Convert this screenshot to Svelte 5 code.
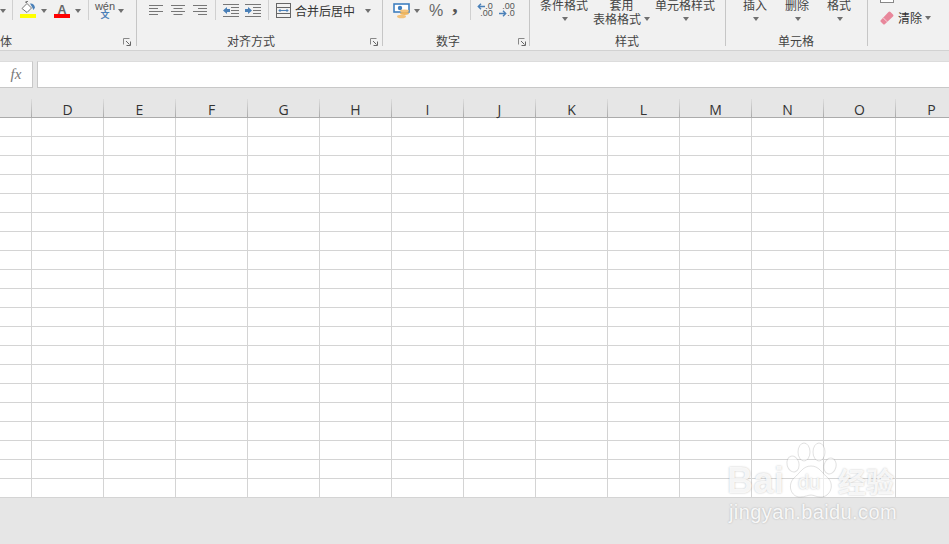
<script>
  const cols = ['', 'D', 'E', 'F', 'G', 'H', 'I', 'J', 'K', 'L', 'M', 'N', 'O', 'P'];
  const rows = Array.from({ length: 20 }, (_, i) => i);
</script>

{#snippet arrow(cls = '')}
  <i class="arrow {cls}"></i>
{/snippet}

{#snippet launcher()}
  <svg class="launcher" width="8" height="8" viewBox="0 0 8 8">
    <path d="M0.5 6.5V0.5H6.5" fill="none" stroke="#888" />
    <path d="M3 3L6.5 6.5M7.5 3.5V7.5H3.5" fill="none" stroke="#666" />
  </svg>
{/snippet}

<div class="page">
  <header class="ribbon">
    <section class="group g1">
      <div class="tools">
        {@render arrow('a1')}
        <b class="vsep s1"></b>
        <div class="color-tool">
          <svg width="16" height="13" viewBox="0 0 16 13">
            <path d="M2 7.5L7 2.5L11.5 7L7 11.5Z" fill="#fff" stroke="#777" />
            <path d="M5 1.5L7 0M6 2L8 0" stroke="#777" fill="none" />
            <path d="M10 2.5Q14 2 15 6.5L13.5 9L12 6Z" fill="#4a80b8" />
          </svg>
          <span class="bar yellow"></span>
        </div>
        {@render arrow('a2')}
        <div class="color-tool font-a">
          <span class="big-a">A</span>
          <span class="bar red"></span>
        </div>
        {@render arrow('a2')}
        <b class="vsep s2"></b>
        <div class="wen"><span class="w1">wén</span><span class="w2">文</span></div>
        {@render arrow('a3')}
      </div>
      <div class="caption c1"><span>体</span>{@render launcher()}</div>
    </section>

    <section class="group g2">
      <div class="tools">
        <svg class="ic-align" width="14" height="11" viewBox="0 0 14 11"><path d="M0 .5H14M0 3.5H9M0 6.5H14M0 9.5H9" stroke="#777" /></svg>
        <svg class="ic-align next" width="14" height="11" viewBox="0 0 14 11"><path d="M0 .5H14M2.500 3.500H11.500M0 6.500H14M2.500 9.500H11.500" stroke="#777" /></svg>
        <svg class="ic-align next" width="14" height="11" viewBox="0 0 14 11"><path d="M0 .5H14M5 3.5H14M0 6.5H14M5 9.5H14" stroke="#777" /></svg>
        <b class="vsep s3"></b>
        <svg class="ic-indent" width="16" height="13" viewBox="0 0 16 13">
          <path d="M0 .5H16M8 3.500H16M8 6.500H16M8 9.500H16M0 12.500H16" stroke="#777" />
          <path d="M0 6.500L4 3V5H7V8H4V10Z" fill="#4a80b8" />
        </svg>
        <svg class="ic-indent next2" width="16" height="13" viewBox="0 0 16 13">
          <path d="M0 .5H16M8 3.500H16M8 6.500H16M8 9.500H16M0 12.500H16" stroke="#777" />
          <path d="M7 6.500L3 3V5H0V8H3V10Z" fill="#4a80b8" />
        </svg>
        <b class="vsep s4"></b>
        <svg class="ic-merge" width="15" height="15" viewBox="0 0 15 15">
          <rect x=".5" y=".5" width="14" height="14" fill="none" stroke="#666" />
          <path d="M.5 4.500H14.500M.5 10.500H14.500" stroke="#666" />
          <path d="M3 7.500H12M4.500 6L3 7.500L4.500 9M10.500 6L12 7.500L10.500 9" fill="none" stroke="#4a80b8" />
        </svg>
        <span class="merge-label">合并后居中</span>
        {@render arrow('a4')}
      </div>
      <div class="caption c2"><span>对齐方式</span>{@render launcher()}</div>
    </section>

    <section class="group g3">
      <div class="tools">
        <svg class="ic-money" width="17" height="16" viewBox="0 0 17 16">
          <rect x="1" y="1" width="15" height="8" fill="#fff" stroke="#3f7fc0" stroke-width="1.600" />
          <circle cx="7" cy="5" r="2.200" fill="#3f7fc0" />
          <ellipse cx="11.500" cy="8" rx="4.500" ry="1.400" fill="#f3c27a" />
          <ellipse cx="11.500" cy="10.500" rx="4.500" ry="1.400" fill="#efb65f" />
          <ellipse cx="8.500" cy="13.500" rx="4.500" ry="1.800" fill="#f3c27a" />
        </svg>
        {@render arrow('a5')}
        <span class="pct">%</span>
        <span class="comma">,</span>
        <b class="vsep s5"></b>
        <div class="dec d1">
          <span class="dline"><svg width="8" height="7" viewBox="0 0 8 7"><path d="M8 3.500H1.500M4 .8L1.300 3.500L4 6.200" fill="none" stroke="#4a80b8" stroke-width="1.400" /></svg>.0</span>
          <span class="dline">.00</span>
        </div>
        <div class="dec d2">
          <span class="dline">.00</span>
          <span class="dline"><svg width="8" height="7" viewBox="0 0 8 7"><path d="M0 3.500H6.500M4 .8L6.700 3.500L4 6.200" fill="none" stroke="#4a80b8" stroke-width="1.400" /></svg>.0</span>
        </div>
      </div>
      <div class="caption c3"><span>数字</span>{@render launcher()}</div>
    </section>

    <section class="group g4">
      <div class="tools text-tools">
        <div class="stack s-a"><span>条件格式</span>{@render arrow('low')}</div>
        <div class="stack s-b"><span>套用</span><span class="inline">表格格式{@render arrow('side')}</span></div>
        <div class="stack s-c"><span>单元格样式</span>{@render arrow('low')}</div>
      </div>
      <div class="caption c4"><span>样式</span></div>
    </section>

    <section class="group g5">
      <div class="tools text-tools">
        <div class="stack cell first"><span>插入</span>{@render arrow('low')}</div>
        <div class="stack cell"><span>删除</span>{@render arrow('low')}</div>
        <div class="stack cell"><span>格式</span>{@render arrow('low')}</div>
      </div>
      <div class="caption c5"><span>单元格</span></div>
    </section>

    <section class="group g6">
      <i class="clip-box"></i>
      <div class="clear">
        <svg width="14" height="14" viewBox="0 0 14 14">
          <path d="M0.500 9.500L8.500 1Q9.500 0 10.500 1L13 3.500Q14 4.500 13 5.500L5 13Q4 14 3 13L1 11Q0 10.200 .5 9.500Z" fill="#e8879b" />
          <path d="M3.200 6.800L7.200 10.800" stroke="#f6d5dc" />
        </svg>
        <span>清除</span>
        {@render arrow('a6')}
      </div>
    </section>
  </header>

  <div class="formula">
    <div class="fx">fx</div>
    <div class="input"></div>
  </div>

  <div class="sheet">
    <div class="head">
      {#each cols as c}
        <div class="hcell">{c}</div>
      {/each}
    </div>
    {#each rows as r (r)}
      <div class="row">
        {#each cols as c}
          <div class="cell-box"></div>
        {/each}
      </div>
    {/each}
  </div>

  <div class="mark">
    <div class="logo">
      <span class="bai">Bai</span>
      <svg class="paw" width="52" height="58" viewBox="0 0 52 58">
        <g fill="rgba(255,255,255,.55)" stroke="rgba(120,120,120,.22)">
          <ellipse cx="8" cy="22" rx="6" ry="8" transform="rotate(-15 8 22)" />
          <ellipse cx="19" cy="10" rx="6" ry="9" />
          <ellipse cx="34" cy="10" rx="6" ry="9" />
          <ellipse cx="45" cy="24" rx="6" ry="8" transform="rotate(15 45 24)" />
          <path d="M26 24C34 24 37 31 43 36C50 43 45 55 36 55C31 55 29 53 26 53C23 53 20 55 15 55C6 55 2 43 9 36C15 31 18 24 26 24Z" />
        </g>
      </svg>
      <span class="du">du</span>
      <span class="jy">经验</span>
    </div>
    <div class="url">jingyan.baidu.com</div>
  </div>
</div>

<style>
  :global(body) { margin: 0; }
  .page {
    position: relative;
    width: 949px;
    height: 544px;
    overflow: hidden;
    background: #e6e6e6;
    font-family: "Noto Sans CJK SC", "Liberation Sans", sans-serif;
    color: #444;
  }
  .ribbon {
    display: flex;
    height: 50px;
    overflow: hidden;
    background: #f1f1f1;
    border-bottom: 1px solid #d2d2d2;
  }
  .group {
    height: 46px;
    display: flex;
    flex-direction: column;
    justify-content: space-between;
    box-sizing: border-box;
    border-right: 1px solid #c6c6c6;
    flex: none;
  }
  .g1 { width: 137px; }
  .g2 { width: 246px; }
  .g3 { width: 147px; }
  .g4 { width: 196px; }
  .g5 { width: 142px; }
  .g6 { flex: 1; border-right: 0; justify-content: flex-start; }

  .tools { display: flex; align-items: center; height: 21px; }
  .caption {
    display: flex;
    align-items: center;
    height: 16px;
    margin-bottom: -3px;
    font-size: 12px;
    line-height: 16px;
    color: #444;
    white-space: nowrap;
  }
  .launcher { margin-left: auto; flex: none; position: relative; top: 1px; }
  .c1 { padding-right: 5px; }
  .c2 { padding-left: 90px; padding-right: 4px; }
  .c3 { padding-left: 53px; padding-right: 3px; }
  .c4 { padding-left: 85px; }
  .c5 { padding-left: 52px; }

  .arrow {
    display: block;
    flex: none;
    width: 0;
    height: 0;
    border-left: 3.500px solid transparent;
    border-right: 3.500px solid transparent;
    border-top: 4px solid #707070;
  }
  .vsep { display: block; flex: none; width: 1px; height: 20px; background: #d0d0d0; align-self: flex-start; }
  .s1 { margin-left: 6px; }
  .color-tool {
    display: flex;
    flex-direction: column;
    align-items: center;
    width: 16px;
    height: 18px;
    margin-left: 7px;
    align-self: flex-start;
  }
  .color-tool svg { margin-top: 1px; }
  .font-a { margin-left: 7px; }
  .bar { display: block; flex: none; width: 16px; height: 4px; }
  .yellow { background: #ffff00; }
  .red { background: #ff0000; }
  .big-a {
    font: bold 12.500px/12px "Liberation Sans", sans-serif;
    height: 10px;
    margin-top: 4px;
    color: #666;
  }
  .color-tool + .arrow { margin-left: 5px; }
  .s2 { margin-left: 7px; }
  .wen {
    display: flex;
    flex-direction: column;
    align-items: center;
    width: 18px;
    margin-left: 7px;
    align-self: flex-start;
  }
  .w1 { font: 11px/12px "Liberation Sans", sans-serif; color: #555; }
  .w2 { font-size: 9px; line-height: 4px; height: 4px; margin-top: 1px; color: #4a80b8; font-weight: 700; }
  .a3 { margin-left: 4px; }

  .ic-align { margin-left: 12px; }
  .ic-align.next { margin-left: 8px; }
  .s3 { margin-left: 8px; }
  .ic-indent { margin-left: 7px; }
  .ic-indent.next2 { margin-left: 6px; }
  .s4 { margin-left: 7px; }
  .ic-merge { margin-left: 7px; }
  .merge-label { font-size: 12px; color: #333; margin-left: 4px; white-space: nowrap; }
  .a4 { margin-left: 10px; }

  .ic-money { margin-left: 10px; }
  .a5 { margin-left: 4px; }
  .pct { font: 16px/20px "Liberation Sans", sans-serif; color: #666; margin-left: 9px; }
  .comma { font: bold 22px/20px "Liberation Serif", serif; color: #555; margin-left: 9px; position: relative; top: -6px; }
  .s5 { margin-left: 12px; }
  .dec {
    display: flex;
    flex-direction: column;
    align-items: flex-end;
    width: 15px;
    align-self: flex-start;
    margin-top: 3px;
    font: 9px/7px "Liberation Sans", sans-serif;
    color: #555;
  }
  .dline { display: flex; align-items: center; height: 7px; white-space: nowrap; }
  .d1 { margin-left: 7px; }
  .d2 { margin-left: 7px; }

  .text-tools {
    align-items: flex-start;
    margin-top: -2px;
    height: 23px;
    font-size: 12px;
    color: #444;
    white-space: nowrap;
  }
  .stack { display: flex; flex-direction: column; align-items: center; }
  .stack span { line-height: 14px; height: 14px; }
  .stack .low { margin: 5px 0 0 2px; }
  .inline { display: flex; align-items: center; }
  .side { margin-left: 3px; }
  .s-a { margin-left: 10px; }
  .s-b { margin-left: 5px; }
  .s-c { margin-left: 5px; }
  .cell { margin-left: 18px; }
  .cell.first { margin-left: 17px; }

  .clip-box {
    display: block;
    flex: none;
    width: 12px;
    height: 2px;
    margin-left: 12px;
    border: 1px solid #888;
    border-top: 0;
    background: #fff;
  }
  .clear {
    display: flex;
    align-items: center;
    margin: 6px 0 0 12px;
    font-size: 12px;
    color: #333;
  }
  .clear span { margin-left: 4px; }
  .a6 { margin-left: 3px; }

  .formula {
    display: flex;
    gap: 4px;
    height: 27px;
    margin-top: 10px;
  }
  .fx {
    width: 33px;
    box-sizing: border-box;
    background: #fff;
    border-right: 1px solid #c8c8c8;
    border-bottom: 1px solid #c8c8c8;
    border-top: 1px solid #dcdcdc;
    font: italic 15px/24px "Liberation Serif", serif;
    color: #777;
    text-align: center;
  }
  .input {
    flex: 1;
    box-sizing: border-box;
    background: #fff;
    border-left: 1px solid #c8c8c8;
    border-bottom: 1px solid #c8c8c8;
    border-top: 1px solid #dcdcdc;
  }

  .sheet { margin-top: 11px; width: 1040px; }
  .head, .row { display: grid; grid-template-columns: 32px repeat(13, 72px); }
  .head { height: 19px; box-sizing: border-box; border-bottom: 1px solid #ababab; }
  .hcell {
    box-sizing: border-box;
    height: 18px;
    border-right: 1px solid;
    border-image: linear-gradient(#e0e0e0, #a8a8a8) 1;
    text-align: center;
    font: 14px/22px "Open Sans", "Liberation Sans", sans-serif;
    color: #333;
    background: #e6e6e6;
  }
  .row { height: 19px; background: #fff; }
  .cell-box {
    box-sizing: border-box;
    border-right: 1px solid #d4d4d4;
    border-bottom: 1px solid #d4d4d4;
  }

  .mark {
    position: absolute;
    left: 727px;
    top: 442px;
    width: 180px;
    color: rgba(255, 255, 255, .85);
    text-shadow: 0 0 2px rgba(0, 0, 0, .25);
  }
  .logo { position: relative; height: 58px; }
  .bai {
    position: absolute;
    left: 0;
    top: 19px;
    font: bold 36px/40px "Liberation Sans", sans-serif;
    letter-spacing: .5px;
  }
  .paw { position: absolute; left: 58px; top: 0; }
  .du {
    position: absolute;
    left: 71px;
    top: 29px;
    font: 20px/22px "Liberation Sans", sans-serif;
  }
  .jy {
    position: absolute;
    left: 111px;
    top: 21px;
    font-size: 28px;
    line-height: 36px;
    font-weight: 700;
    white-space: nowrap;
  }
  .url {
    padding-left: 2px;
    font: 20px/24px "Liberation Sans", sans-serif;
    letter-spacing: .4px;
    color: rgba(255, 255, 255, .9);
    white-space: nowrap;
  }
</style>
